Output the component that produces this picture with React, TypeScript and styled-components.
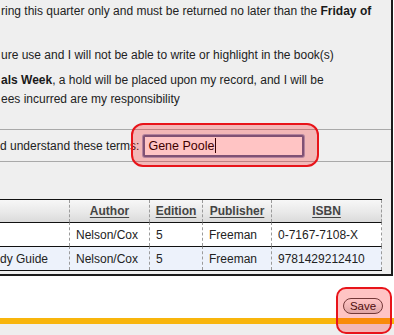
import React from "react";
import styled, { createGlobalStyle } from "styled-components";

const GlobalStyle = createGlobalStyle`
  html, body { margin: 0; padding: 0; background: #ffffff; }
  body {
    font-family: "Liberation Sans", Arial, Helvetica, sans-serif;
    font-size: 12px;
    color: #222222;
  }
`;

const Page = styled.div`
  position: relative;
  width: 394px;
  height: 335px;
  overflow: hidden;
  background: #ffffff;
  display: flex;
  flex-direction: column;
`;

const Panel = styled.section`
  width: 393px;
  box-sizing: border-box;
  background: #efefef;
  border-right: 2px solid #1c1c1c;
  border-bottom: 2px solid #1c1c1c;
  padding-bottom: 3px;
  display: flex;
  flex-direction: column;
`;

const TermsList = styled.div`
  display: flex;
  flex-direction: column;
  gap: 6px;
  padding: 2px 0 0 1px;
`;

const Term = styled.p`
  margin: 0;
  line-height: 19px;
  white-space: nowrap;
  color: #222222;
  b { font-weight: bold; color: #1a1a1a; }
`;

const AgreeRow = styled.div`
  margin-top: 20px;
  height: 31px;
  border-top: 1px solid #a9a9a9;
  border-bottom: 1px solid #a9a9a9;
  display: flex;
  align-items: center;
  gap: 4px;
  white-space: nowrap;
`;

const Highlight = styled.div<{ $radius: number }>`
  position: absolute;
  box-sizing: border-box;
  border: 2px solid #e8141a;
  border-radius: ${(p) => p.$radius}px;
  background: rgba(255, 0, 0, 0.23);
  pointer-events: none;
`;

const FakeInput = styled.div`
  width: 161px;
  height: 22px;
  box-sizing: border-box;
  background: #ffffff;
  border: 2px solid #5a6a98;
  box-shadow: 0 0 0 1px #9eaacb;
  border-radius: 2px;
  display: flex;
  align-items: center;
  padding-left: 3px;
  font-size: 12.5px;
  color: #000000;
`;

const Caret = styled.span`
  display: inline-block;
  width: 1px;
  height: 15px;
  background: #000000;
  margin-left: 1px;
`;

const BookTable = styled.div`
  margin-top: 37px;
  width: 382px;
  display: grid;
  grid-template-columns: 69px 80px 53px 69px 111px;
  border-top: 1px solid #111111;
  border-bottom: 1px solid #111111;
`;

const HeadCell = styled.div<{ $first?: boolean; $last?: boolean }>`
  height: 22px;
  background: linear-gradient(to bottom, #f7f7f7 0%, #e9e9e9 55%, #dadada 100%);
  border-left: ${(p) => (p.$first ? "none" : "1px dashed #9a9a9a")};
  border-right: ${(p) => (p.$last ? "1px dashed #9a9a9a" : "none")};
  display: flex;
  align-items: center;
  justify-content: center;
  font-weight: bold;
  color: #444444;
  text-decoration: underline;
  text-underline-offset: 2px;
`;

const BodyCell = styled.div<{ $first?: boolean; $last?: boolean; $alt?: boolean }>`
  height: 23px;
  border-top: 1px solid #111111;
  background: ${(p) => (p.$alt ? "#edf2fb" : "#ffffff")};
  border-left: ${(p) => (p.$first ? "none" : "1px dashed #9a9a9a")};
  border-right: ${(p) => (p.$last ? "1px dashed #9a9a9a" : "none")};
  display: flex;
  align-items: center;
  padding-left: ${(p) => (p.$first ? "0" : "6px")};
  white-space: nowrap;
  overflow: hidden;
  color: #222222;
`;

const ButtonBar = styled.div`
  height: 42px;
  display: flex;
  justify-content: flex-end;
  align-items: flex-start;
  padding: 22px 11px 0 0;
  box-sizing: border-box;
`;

const SaveButton = styled.button`
  width: 40px;
  height: 16px;
  box-sizing: border-box;
  padding: 0;
  border: 1px solid #4a4a4a;
  border-radius: 8px;
  background: linear-gradient(to bottom, #ffffff 0%, #eeeeee 50%, #d6d6d6 100%);
  font-family: "Liberation Sans", Arial, sans-serif;
  font-size: 11.5px;
  line-height: 14px;
  color: #111111;
`;

const OrangeBar = styled.div`
  height: 6px;
  background: #f8b50c;
`;

const FooterBase = styled.div`
  flex: 1;
  background: #eeeeee;
`;

const headers = ["", "Author", "Edition", "Publisher", "ISBN"];
const rows = [
  ["", "Nelson/Cox", "5", "Freeman", "0-7167-7108-X"],
  ["dy Guide", "Nelson/Cox", "5", "Freeman", "9781429212410"],
];

export default function App() {
  return (
    <>
      <GlobalStyle />
      <Page>
        <Panel>
          <TermsList>
            <Term>
              ring this quarter only and must be returned no later than the <b>Friday of</b>
              <br />
              {"\u00a0"}
            </Term>
            <Term>ure use and I will not be able to write or highlight in the book(s)</Term>
            <Term>
              <b>als Week</b>, a hold will be placed upon my record, and I will be
              <br />
              ees incurred are my responsibility
            </Term>
          </TermsList>
          <AgreeRow>
            <span>d understand these terms:</span>
            <FakeInput>
              Gene Poole
              <Caret />
            </FakeInput>
          </AgreeRow>
          <BookTable>
            {headers.map((h, i) => (
              <HeadCell key={"h" + i} $first={i === 0} $last={i === headers.length - 1}>
                {h}
              </HeadCell>
            ))}
            {rows.map((r, ri) =>
              r.map((c, ci) => (
                <BodyCell
                  key={ri + "-" + ci}
                  $first={ci === 0}
                  $last={ci === r.length - 1}
                  $alt={ri === 1}
                >
                  {c}
                </BodyCell>
              ))
            )}
          </BookTable>
        </Panel>
        <ButtonBar>
          <SaveButton type="button">Save</SaveButton>
        </ButtonBar>
        <OrangeBar />
        <FooterBase />
        <Highlight $radius={12} style={{ left: 131, top: 123, width: 188, height: 44 }} />
        <Highlight $radius={10} style={{ left: 336, top: 287, width: 56, height: 47 }} />
      </Page>
    </>
  );
}
